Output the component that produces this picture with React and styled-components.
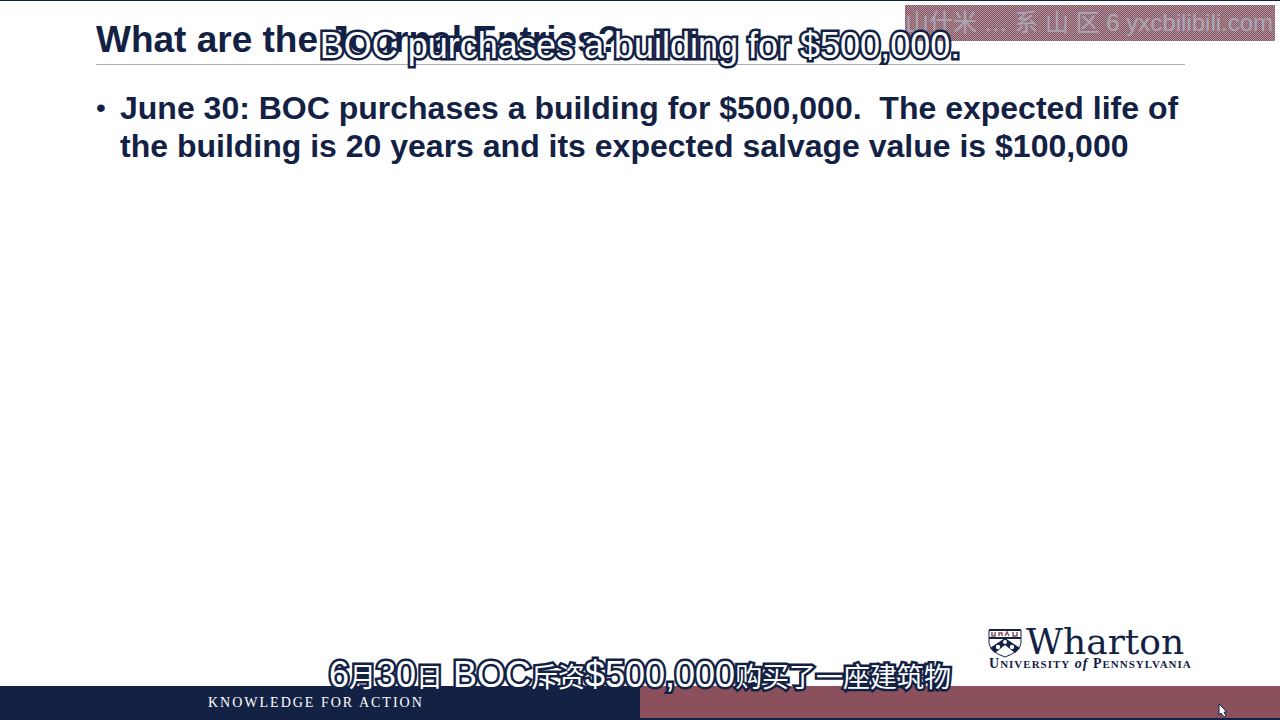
import React from "react";
import styled, { createGlobalStyle } from "styled-components";

const navy = "#132144";
const rose = "#8a505c";

const GlobalStyle = createGlobalStyle`
  * { box-sizing: border-box; }
  body { margin: 0; background: #fff; }
`;

const Slide = styled.main`
  position: relative;
  display: flex;
  flex-direction: column;
  min-height: 100vh;
  overflow: hidden;
  border-top: 1px solid ${navy};
  background: #fff;
  color: ${navy};
  font-family: "Liberation Sans", Arial, sans-serif;
`;

const Header = styled.header`
  margin: 0 95px 0 96px;
  padding: 18px 0 4px;
  border-bottom: 1px solid #adadbb;
`;

const Title = styled.h1`
  margin: 0;
  font-size: 37px;
  line-height: 41px;
  white-space: nowrap;
`;

const Points = styled.ul`
  flex: 1;
  margin: 0;
  padding: 24px 96px 0;
  list-style: none;
`;

const Point = styled.li`
  display: flex;
  font-size: 32px;
  line-height: 38px;
  font-weight: 700;
  &::before {
    content: "•";
    flex: 0 0 24px;
    font-size: 28px;
    font-weight: 400;
  }
`;

const PointText = styled.span`
  white-space: pre-wrap;
`;

const Brand = styled.div`
  display: flex;
  justify-content: flex-end;
  padding: 0 90px 15px 0;
`;

const Logo = styled.svg`
  display: block;
  width: 202px;
  height: 44px;
  overflow: visible;
  fill: ${navy};
  font-family: "Liberation Serif", serif;
`;

const Footer = styled.footer`
  display: grid;
  grid-template-columns: 1fr 1fr;
  height: 34px;
  border-bottom: 2px solid ${navy};
  background: ${rose};
`;

const Motto = styled.div`
  padding-left: 208px;
  background: ${navy};
  color: #fff;
  font-family: "Liberation Serif", serif;
  font-size: 14px;
  line-height: 33px;
  letter-spacing: 2px;
  white-space: nowrap;
`;

const Watermark = styled.div`
  position: absolute;
  top: 4px;
  right: 5px;
  width: 370px;
  height: 36px;
  padding-right: 4px;
  background: repeating-conic-gradient(#8d4f5c 0% 25%, #a898a4 0% 50%) 0 0 / 2px 2px;
  color: #aba6b3;
  font-family: "Liberation Sans", "Noto Sans CJK SC", sans-serif;
  font-size: 24px;
  line-height: 36px;
  text-align: right;
  white-space: nowrap;
`;

const Caption = styled.p`
  position: absolute;
  left: 0;
  right: 0;
  ${(p) => (p.$edge === "top" ? "top: 25px;" : "bottom: 22px;")}
  margin: 0;
  color: #fff;
  font-family: "Liberation Sans", "Noto Sans CJK SC", sans-serif;
  font-size: 36px;
  line-height: 40px;
  text-align: center;
  white-space: nowrap;
  -webkit-text-stroke: 5px ${navy};
  paint-order: stroke fill;
  stroke-linejoin: round;
`;

const Ideographs = styled.span`
  font-size: 27px;
`;

const Pointer = styled.svg`
  position: absolute;
  right: 52px;
  bottom: 2px;
  width: 10px;
  height: 15px;
`;

function WhartonLogo() {
  return (
    <Logo viewBox="0 0 202 44" role="img" aria-label="Wharton, University of Pennsylvania">
      <path d="M1 3H33V16Q32 25 17 30Q2 25 1 16Z" fill="#fff" stroke={navy} strokeWidth="1" />
      <path d="M1 2H33V4H1ZM1 10H33V12H1Z" />
      <path d="M4 5v4h3V5M11 9V6h3v3M17 9l2-4 2 4M25 5v4h4V5" fill="none" stroke={rose} strokeWidth="1.5" />
      <path d="M2 21L17 11L32 21L27 26L17 18L7 26Z" />
      <circle cx="17" cy="15" r="2" fill="#fff" />
      <circle cx="10" cy="20" r="2.2" fill="#fff" />
      <circle cx="24" cy="20" r="2.2" fill="#fff" />
      <text x="38" y="27" fontSize="36" fontFamily="DejaVu Serif, serif">Wharton</text>
      <text x="1" y="41" fontSize="14" fontWeight="700" letterSpacing="1">U<tspan fontSize="11">NIVERSITY</tspan> <tspan fontStyle="italic">of</tspan> P<tspan fontSize="11">ENNSYLVANIA</tspan></text>
    </Logo>
  );
}

export default function App() {
  return (
    <>
      <GlobalStyle />
      <Slide>
        <Header>
          <Title>What are the Journal Entries?</Title>
        </Header>
        <Points>
          <Point>
            <PointText>
              {"June 30: BOC purchases a building for $500,000.  The expected life of the building is 20 years and its expected salvage value is $100,000"}
            </PointText>
          </Point>
        </Points>
        <Brand>
          <WhartonLogo />
        </Brand>
        <Footer>
          <Motto>KNOWLEDGE FOR ACTION</Motto>
        </Footer>
        <Watermark>山什米 … 系 山 区 6 yxcbilibili.com</Watermark>
        <Caption $edge="top">BOC purchases a building for $500,000.</Caption>
        <Caption $edge="bottom">
          6<Ideographs>月</Ideographs>30<Ideographs>日</Ideographs> BOC<Ideographs>斥资</Ideographs>$500,000<Ideographs>购买了一座建筑物</Ideographs>
        </Caption>
        <Pointer viewBox="0 0 10 15" aria-hidden="true">
          <path d="M1 1V12L3 10L6 14L8 13L6 9H9Z" fill="#fff" stroke={navy} />
        </Pointer>
      </Slide>
    </>
  );
}
